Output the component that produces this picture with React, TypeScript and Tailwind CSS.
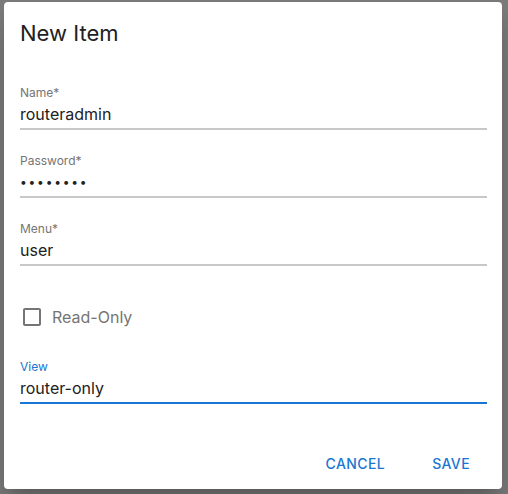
import { useState } from "react";

function Field({ label, value, focused, secret }: { label: string; value: string; focused?: boolean; secret?: boolean }) {
  return (
    <div className={focused ? "border-b-2 border-[#1976d2]" : "border-b-2 border-[#c8c8c8]"}>
      <div className={`text-[12px] leading-[16px] ${focused ? "text-[#1976d2]" : "text-[#757575]"}`}>{label}</div>
      <div
        className={`pt-px pb-[2px] leading-[24px] text-[#212121] ${secret ? "text-[12px] tracking-[1.8px]" : "text-[16px]"}`}
      >
        {value}
      </div>
    </div>
  );
}

export default function App() {
  const [readOnly, setReadOnly] = useState(false);

  return (
    <div className="h-[494px] w-[508px] bg-[#7b7b7b] pl-[4px] pt-[2px] font-['Inter',sans-serif]">
      <div className="h-[487px] w-[498px] rounded-[4px] bg-white shadow-[0_11px_15px_-7px_rgba(0,0,0,0.2),0_24px_38px_3px_rgba(0,0,0,0.14)]">
        <h2 className="px-4 pt-[15px] text-[22px] leading-[32px] text-[#212121]">New Item</h2>

        <div className="mt-[36px] flex flex-col gap-[23px] pl-4 pr-[15px]">
          <Field label="Name*" value="routeradmin" />
          <Field label="Password*" value="••••••••" secret />
          <Field label="Menu*" value="user" />
        </div>

        <label className="mt-[39px] flex items-center gap-[8px] pl-4">
          <span onClick={() => setReadOnly(!readOnly)}>
            <svg width="24" height="24" viewBox="0 0 24 24" fill="#757575">
              <path d="M19 5v14H5V5h14m0-2H5c-1.1 0-2 .9-2 2v14c0 1.1.9 2 2 2h14c1.1 0 2-.9 2-2V5c0-1.1-.9-2-2-2z" />
            </svg>
          </span>
          <span className="text-[16px] leading-[24px] text-[#757575]">Read-Only</span>
        </label>

        <div className="mt-[30px] pl-4 pr-[15px]">
          <Field label="View" value="router-only" focused />
        </div>

        <div className="mt-[48px] flex justify-end gap-[47px] pr-[32px]">
          <button className="text-[14px] font-medium uppercase leading-[24px] tracking-[0.4px] text-[#1976d2]">Cancel</button>
          <button className="text-[14px] font-medium uppercase leading-[24px] tracking-[0.4px] text-[#1976d2]">Save</button>
        </div>
      </div>
    </div>
  );
}
